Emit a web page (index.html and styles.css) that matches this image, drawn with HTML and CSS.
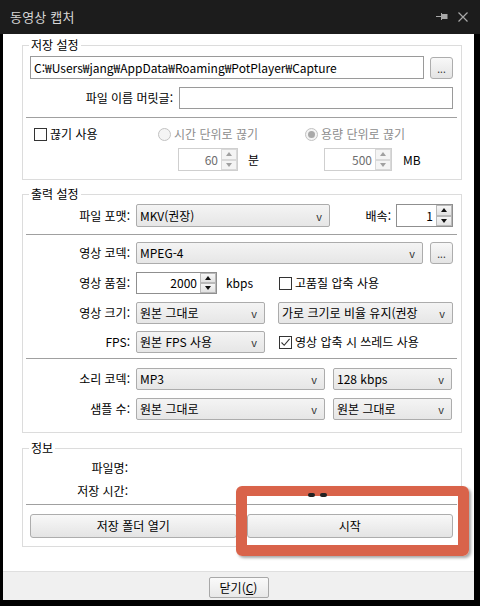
FILE: index.html
```html
<!DOCTYPE html>
<html lang="ko">
<head>
<meta charset="utf-8">
<title>동영상 캡처</title>
<link rel="stylesheet" href="styles.css">
</head>
<body>
<div class="window">
  <div class="titlebar">
    <span class="title">동영상 캡처</span>
    <span class="ctrls">
      <svg class="pin" width="12" height="8" viewBox="0 0 12 8"><path d="M0 3.5H5M5.5 0V7" stroke="#a8a8a8" stroke-width="1" fill="none"/><rect x="6" y="1" width="5.5" height="5" fill="#a8a8a8"/></svg>
      <svg class="close" width="10" height="10" viewBox="0 0 10 10"><path d="M0.5 0.5L9.5 9.5M9.5 0.5L0.5 9.5" stroke="#a8a8a8" stroke-width="1.2" fill="none"/></svg>
    </span>
  </div>
  <div class="client">
    <div class="content">
      <div class="group g1">
        <div class="gtitle">저장 설정</div>
        <div class="row r-path">
          <div class="input path">C:₩Users₩jang₩AppData₩Roaming₩PotPlayer₩Capture</div>
          <div class="btn small">...</div>
        </div>
        <div class="row r-prefix">
          <div class="prefix-lbl">파일 이름 머릿글:</div>
          <div class="input grow"></div>
        </div>
        <div class="sep"></div>
        <div class="row r-split">
          <div class="cell c1"><span class="chk"></span><span>끊기 사용</span></div>
          <div class="cell c2 disabled"><span class="radio"></span><span>시간 단위로 끊기</span></div>
          <div class="cell c3 disabled"><span class="radio on"></span><span>용량 단위로 끊기</span></div>
        </div>
        <div class="row r-spins">
          <div class="cell c1"></div>
          <div class="cell c2 pad20">
            <div class="spin dis w60"><span class="val">60</span><span class="sbtns"><span class="sb up"><i></i></span><span class="sb dn"><i></i></span></span></div>
            <span class="unit u1">분</span>
          </div>
          <div class="cell c3 pad19">
            <div class="spin dis w68"><span class="val">500</span><span class="sbtns"><span class="sb up"><i></i></span><span class="sb dn"><i></i></span></span></div>
            <span class="unit u2">MB</span>
          </div>
        </div>
      </div>

      <div class="group g2">
        <div class="gtitle">출력 설정</div>
        <div class="row frow r-fmt">
          <div class="lbl">파일 포맷:</div>
          <div class="sel w194"><span>MKV(권장)</span><span class="arr">v</span></div>
          <div class="lbl speed-lbl">배속:</div>
          <div class="spin w57"><span class="val">1</span><span class="sbtns"><span class="sb up"><i></i></span><span class="sb dn"><i></i></span></span></div>
        </div>
        <div class="sep s2a"></div>
        <div class="row frow r-codec">
          <div class="lbl">영상 코덱:</div>
          <div class="sel grow"><span>MPEG-4</span><span class="arr">v</span></div>
          <div class="btn small">...</div>
        </div>
        <div class="row frow r-q">
          <div class="lbl">영상 품질:</div>
          <div class="lcell">
            <div class="spin w81"><span class="val">2000</span><span class="sbtns"><span class="sb up"><i></i></span><span class="sb dn"><i></i></span></span></div>
            <span class="unit kbps">kbps</span>
          </div>
          <div class="rcell"><span class="chk"></span><span>고품질 압축 사용</span></div>
        </div>
        <div class="row frow r-size">
          <div class="lbl">영상 크기:</div>
          <div class="lcell"><div class="sel full"><span>원본 그대로</span><span class="arr">v</span></div></div>
          <div class="rcell"><div class="sel full"><span class="clip">가로 크기로 비율 유지(권장</span><span class="arr">v</span></div></div>
        </div>
        <div class="row frow r-fps">
          <div class="lbl">FPS:</div>
          <div class="lcell"><div class="sel full"><span>원본 FPS 사용</span><span class="arr">v</span></div></div>
          <div class="rcell"><span class="chk on"><svg width="11" height="11" viewBox="0 0 11 11"><path d="M1.5 5.5L4.2 8.3L9.6 1.8" stroke="#333" stroke-width="1.1" fill="none"/></svg></span><span>영상 압축 시 쓰레드 사용</span></div>
        </div>
        <div class="sep s2b"></div>
        <div class="row frow r-audio">
          <div class="lbl">소리 코덱:</div>
          <div class="sel w189"><span>MP3</span><span class="arr">v</span></div>
          <div class="sel grow"><span>128 kbps</span><span class="arr">v</span></div>
        </div>
        <div class="row frow r-sample">
          <div class="lbl">샘플 수:</div>
          <div class="sel w189"><span>원본 그대로</span><span class="arr">v</span></div>
          <div class="sel grow"><span>원본 그대로</span><span class="arr">v</span></div>
        </div>
      </div>

      <div class="group g3">
        <div class="gtitle">정보</div>
        <div class="row frow r-name"><div class="lbl lbl3">파일명:</div></div>
        <div class="row frow r-time"><div class="lbl lbl3">저장 시간:</div></div>
        <div class="sep s3"></div>
        <div class="row r-btns">
          <div class="btn big">저장 폴더 열기</div>
          <div class="btn big">시작</div>
        </div>
      </div>
    </div>
    <div class="footer">
      <div class="btn closebtn">닫기(<u>C</u>)</div>
    </div>
  </div>
  <div class="highlight"><span class="mark m1"></span><span class="mark m2"></span></div>
</div>
</body>
</html>
```

FILE: styles.css
```css
* { box-sizing: border-box; }
body {
  margin: 0;
  background: #000;
  font-family: "Noto Sans CJK KR", "Noto Sans", sans-serif;
  font-size: 12px;
  line-height: 16px;
  color: #000;
}
.window {
  width: 480px;
  height: 606px;
  position: relative;
  background: #000;
  overflow: hidden;
}
.titlebar {
  height: 34px;
  background: #1c1c1c;
  display: flex;
  align-items: center;
  padding: 0 12px 0 10px;
}
.title {
  flex: 1;
  color: #d6d6d6;
  font-size: 13px;
  letter-spacing: 0.2px;
}
.ctrls {
  display: flex;
  align-items: center;
  gap: 10px;
}
.client {
  margin: 0 6px 0 3px;
}
.content {
  background: #fff;
  height: 537px;
  padding: 11px 12px 0 19px;
  display: flex;
  flex-direction: column;
}
.group {
  border: 1px solid #dcdcdc;
  padding: 0 8px 8px 7px;
  display: flex;
  flex-direction: column;
}
.g2 { margin-top: 14px; padding-bottom: 12px; }
.g3 { margin-top: 15px; padding-bottom: 8px; }
.gtitle {
  align-self: flex-start;
  margin: -9px 0 0 -1px;
  padding: 0 2px;
  background: #fff;
  line-height: 16px;
  height: 16px;
}
.row {
  display: flex;
  align-items: center;
}
.grow { flex: 1; }
.sep {
  height: 1px;
  background: #a0a0a0;
  margin: 8px -4px 0 -4px;
}
.input {
  border: 1px solid #9a9a9a;
  background: #fff;
  height: 22px;
  padding: 0 4px;
  display: flex;
  align-items: center;
  white-space: nowrap;
  overflow: hidden;
}
.btn {
  border: 1px solid #adadad;
  border-radius: 3px;
  background: linear-gradient(#f8f8f8, #e4e4e4);
  display: flex;
  align-items: center;
  justify-content: center;
}
.btn.small {
  width: 23px;
  height: 22px;
  font-size: 10px;
  line-height: 10px;
  color: #333;
  padding-top: 2px;
}

/* group 1 */
.r-path { margin-top: 3px; gap: 6px; }
.r-path .input { flex: 1; height: 23px; padding-left: 3px; }
.r-prefix { margin-top: 8px; gap: 6px; }
.prefix-lbl { width: 143px; text-align: right; flex: none; white-space: nowrap; }
.r-prefix .input { height: 22px; }
.r-split { margin-top: 8px; height: 16px; }
.r-spins { margin-top: 6px; height: 23px; }
.cell { display: flex; align-items: center; }
.c1 { width: 128px; }
.c2 { width: 147px; }
.c3 { flex: 1; }
.c1 .chk { margin-left: 4px; }
.pad20 { padding-left: 20px; }
.pad19 { padding-left: 19px; }
.disabled { color: #8d8d8d; }
.chk {
  width: 13px;
  height: 13px;
  border: 1px solid #333;
  background: #fff;
  margin-right: 3px;
  flex: none;
  display: flex;
  align-items: center;
  justify-content: center;
}
.radio {
  width: 13px;
  height: 13px;
  border: 1px solid #c2c2c2;
  border-radius: 50%;
  background: #f4f4f4;
  margin-right: 3px;
  flex: none;
  display: flex;
  align-items: center;
  justify-content: center;
}
.radio.on::after {
  content: "";
  width: 7px;
  height: 7px;
  border-radius: 50%;
  background: #a9a9a9;
}
.unit { margin-left: 10px; }
.u2 { margin-left: 11px; }
.kbps { margin-left: 9px; }

/* spin */
.spin {
  display: flex;
  height: 23px;
  border: 1px solid #8f8f8f;
  background: #fff;
  flex: none;
}
.spin.dis { border-color: #cfcfcf; color: #6e6e6e; }
.w60 { width: 60px; }
.w68 { width: 68px; }
.w57 { width: 57px; height: 23px; }
.w81 { width: 81px; height: 22px; }
.spin .val {
  flex: 1;
  text-align: right;
  padding-right: 3px;
  display: flex;
  align-items: center;
  justify-content: flex-end;
}
.sbtns {
  width: 16px;
  display: flex;
  flex-direction: column;
}
.sb {
  flex: 1;
  border: 1px solid #b9b9b9;
  background: linear-gradient(#f6f6f6, #e2e2e2);
  display: flex;
  align-items: center;
  justify-content: center;
}
.spin.dis .sb { border-color: #d9d9d9; background: #f4f4f4; }
.sb i {
  width: 0;
  height: 0;
  border-left: 3.5px solid transparent;
  border-right: 3.5px solid transparent;
}
.sb.up i { border-bottom: 4px solid #111; }
.sb.dn i { border-top: 4px solid #111; }
.spin.dis .sb.up i { border-bottom-color: #a0a0a0; }
.spin.dis .sb.dn i { border-top-color: #a0a0a0; }

/* selects */
.sel {
  display: flex;
  align-items: center;
  justify-content: space-between;
  height: 22px;
  border: 1px solid #acacac;
  border-radius: 2px;
  background: linear-gradient(#f4f4f4, #e6e6e6);
  padding: 0 7px 0 3px;
  white-space: nowrap;
  overflow: hidden;
}
.sel .arr { color: #333; font-size: 11px; margin-left: 6px; flex: none; }
.sel .clip { overflow: hidden; flex: 1; }
.full { width: 100%; }
.w194 { width: 194px; height: 23px; }
.w189 { width: 189px; }

/* group 2 */
.frow { gap: 6px; }
.lbl { width: 100px; text-align: right; flex: none; white-space: nowrap; }
.speed-lbl { width: auto; margin-left: auto; margin-right: -1px; }
.r-fmt { margin-top: 2px; height: 23px; }
.s2a { margin-top: 7px; }
.r-codec { margin-top: 7px; }
.r-codec .btn.small { margin-left: 1px; }
.r-q { margin-top: 8px; height: 22px; }
.lcell { width: 129px; display: flex; align-items: center; flex: none; }
.rcell { flex: 1; display: flex; align-items: center; margin-left: 7px; }
.rcell .chk { margin-left: 1px; }
.r-size { margin-top: 8px; }
.r-fps { margin-top: 7px; }
.s2b { margin-top: 5px; }
.r-audio { margin-top: 9px; gap: 6px; }
.r-audio .grow, .r-sample .grow { margin-left: 2px; margin-right: 1px; }
.r-sample { margin-top: 8px; gap: 6px; }

/* group 3 */
.lbl3 { width: 98px; }
.r-name { margin-top: 4px; height: 16px; }
.r-time { margin-top: 7px; height: 16px; }
.s3 { margin-top: 5px; }
.r-btns { margin-top: 9px; gap: 10px; }
.btn.big { flex: 1; height: 24px; }

/* footer */
.footer {
  height: 29px;
  border-top: 1px solid #dfdfdf;
  background: #f0f0f0;
  display: flex;
  justify-content: center;
  padding-top: 5px;
}
.closebtn {
  width: 60px;
  height: 21px;
  border-radius: 2px;
  border-color: #a8a8a8;
  background: linear-gradient(#fafafa, #e8e8e8);
}
.closebtn u { text-underline-offset: 1px; }

/* highlight overlay */
.highlight {
  position: absolute;
  left: 236px;
  top: 486px;
  width: 233px;
  height: 70px;
  border: 11px solid #d9634a;
  border-top-width: 10px;
  border-radius: 6px;
  box-shadow: 2px 2px 3px rgba(0, 0, 0, 0.35);
}
.mark {
  position: absolute;
  top: -3px;
  width: 7px;
  height: 4px;
  background: #222;
  border-radius: 2px;
}
.m1 { left: 61px; }
.m2 { left: 73px; }
```
